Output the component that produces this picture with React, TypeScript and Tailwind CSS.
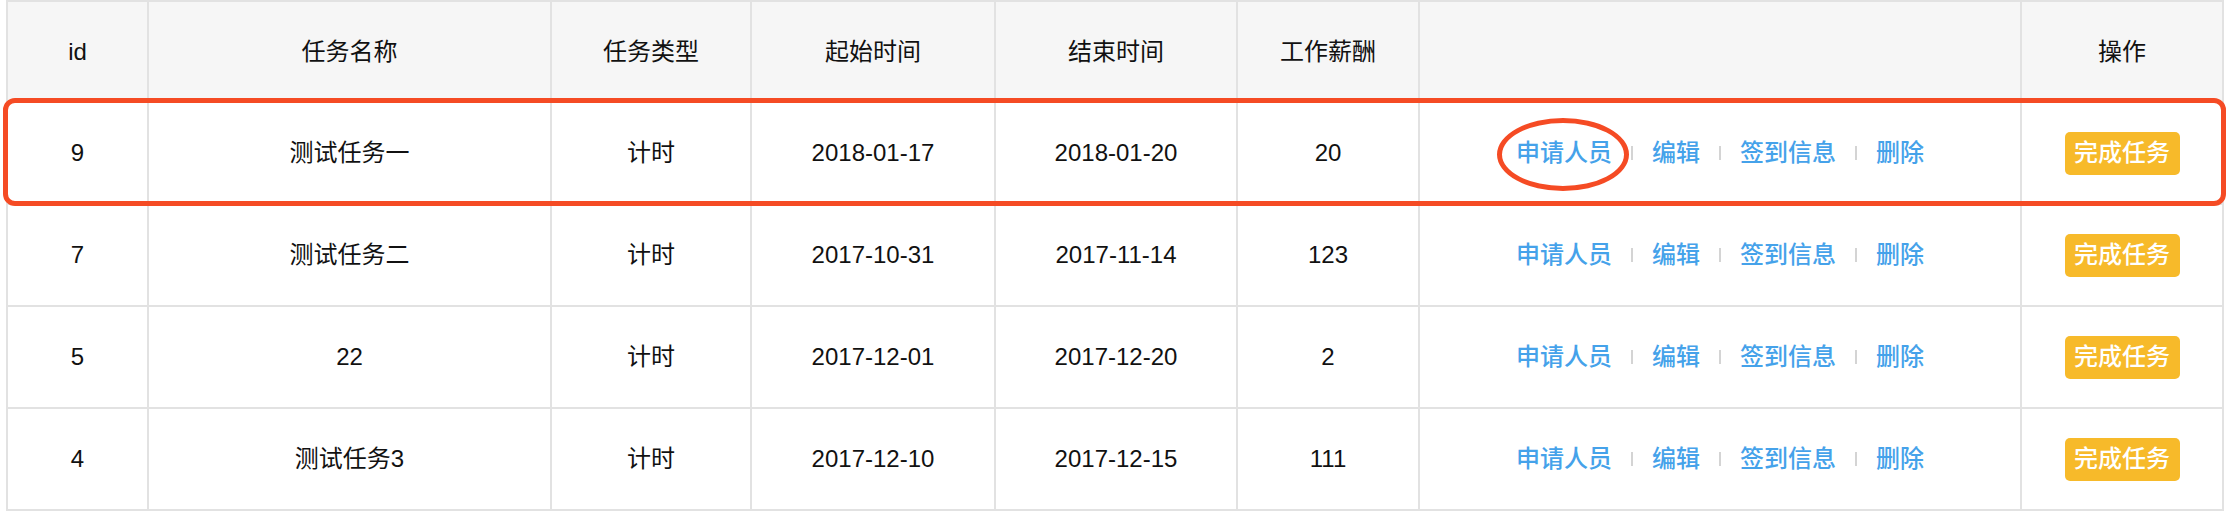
import React from 'react';

interface Task {
  id: number;
  name: string;
  type: string;
  start: string;
  end: string;
  pay: number;
}

const tasks: Task[] = [
  { id: 9, name: '测试任务一', type: '计时', start: '2018-01-17', end: '2018-01-20', pay: 20 },
  { id: 7, name: '测试任务二', type: '计时', start: '2017-10-31', end: '2017-11-14', pay: 123 },
  { id: 5, name: '22', type: '计时', start: '2017-12-01', end: '2017-12-20', pay: 2 },
  { id: 4, name: '测试任务3', type: '计时', start: '2017-12-10', end: '2017-12-15', pay: 111 },
];

const headers = ['id', '任务名称', '任务类型', '起始时间', '结束时间', '工作薪酬', '', '操作'];

const cell = 'flex items-center justify-center border-r-2 border-b-2 border-[#e2e2e2]';

const Divider = () => <span className="mx-[19px] h-[14px] w-[2px] bg-[#d4d4d4]" />;

const ActionLinks = () => (
  <div className="flex items-center font-medium text-[#45a2ea]">
    <a className="cursor-pointer">申请人员</a>
    <Divider />
    <a className="cursor-pointer">编辑</a>
    <Divider />
    <a className="cursor-pointer">签到信息</a>
    <Divider />
    <a className="cursor-pointer">删除</a>
  </div>
);

export default function App() {
  return (
    <div
      className="relative min-h-[518px] bg-white pl-[6px] text-[24px] text-[#111]"
      style={{ fontFamily: '"Liberation Sans", "Noto Sans CJK SC", sans-serif' }}
    >
      <div className="grid w-[2218px] grid-cols-[141px_403px_200px_244px_242px_182px_602px_202px] border-l-2 border-t-2 border-[#e2e2e2]">
        {/* Header */}
        {headers.map((h, i) => (
          <div key={i} className={`${cell} h-[101px] bg-[#f6f6f6]`}>
            {h}
          </div>
        ))}

        {/* Rows */}
        {tasks.map((t) => (
          <React.Fragment key={t.id}>
            <div className={`${cell} h-[102px]`}>{t.id}</div>
            <div className={`${cell} h-[102px]`}>{t.name}</div>
            <div className={`${cell} h-[102px]`}>{t.type}</div>
            <div className={`${cell} h-[102px]`}>{t.start}</div>
            <div className={`${cell} h-[102px]`}>{t.end}</div>
            <div className={`${cell} h-[102px]`}>{t.pay}</div>
            <div className={`${cell} h-[102px]`}>
              <ActionLinks />
            </div>
            <div className={`${cell} h-[102px]`}>
              <button className="h-[43px] w-[115px] rounded-[5px] bg-[#f7ba2a] font-medium text-white">
                完成任务
              </button>
            </div>
          </React.Fragment>
        ))}
      </div>

      {/* Annotation: highlighted row */}
      <div className="pointer-events-none absolute left-[3px] top-[98px] h-[108px] w-[2223px] rounded-[12px] border-[5px] border-[#f54b24]" />
      {/* Annotation: circled link */}
      <div className="pointer-events-none absolute left-[1497px] top-[118px] h-[73px] w-[132px] rounded-[50%] border-[5px] border-[#f54b24]" />
    </div>
  );
}
